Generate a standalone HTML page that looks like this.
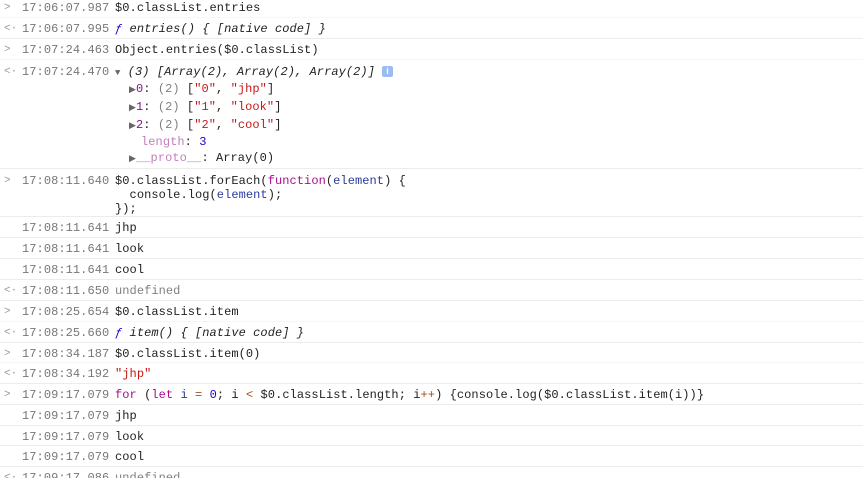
<!DOCTYPE html>
<html><head><style>
html,body{margin:0;padding:0;background:#fff;width:863px;height:478px;overflow:hidden}
body{font-family:"Liberation Mono",monospace;font-size:12px;letter-spacing:0.07px;color:#222;position:relative}
.r{position:absolute;left:0;width:863px;border-bottom:1px solid #ececec;box-sizing:border-box}
.l{position:absolute;white-space:pre;line-height:14px}
.p{position:absolute;left:4px;color:#999;font-size:11px;line-height:14px}
.ts{left:22px;color:#777}
.tx{left:115px}
.s{color:#c41a16}.n{color:#1c00cf}.k{color:#aa0d91}.v{color:#2a3a9a}.o{color:#a0501a}
.pr{color:#881391}.g{color:#808080}.lp{color:#c080c0}.f{color:#1c00cf}
.it{font-style:italic}
.tri{color:#666;font-size:9px}
</style></head><body>
<div class="r" style="top:-3px;height:21px;border-bottom-color:#f6f6f6"><span class="p" style="top:4px">&gt;</span><span class="l ts" style="top:4px">17:06:07.987</span><span class="l tx" style="top:4px">$0.classList.entries</span></div>
<div class="r" style="top:18px;height:21px"><span class="p" style="top:4px">&lt;·</span><span class="l ts" style="top:4px">17:06:07.995</span><span class="l tx it" style="top:4px"><span class="f">ƒ</span> entries() { [native code] }</span></div>
<div class="r" style="top:39px;height:21px;border-bottom-color:#f6f6f6"><span class="p" style="top:4px">&gt;</span><span class="l ts" style="top:4px">17:07:24.463</span><span class="l tx" style="top:4px">Object.entries($0.classList)</span></div>
<div class="r" style="top:60px;height:109px"><span class="p" style="top:5px">&lt;·</span><span class="l ts" style="top:5px">17:07:24.470</span>
<span class="l tx it" style="top:5px"><span class="tri">▼</span> (3) [Array(2), Array(2), Array(2)]</span>
<span style="position:absolute;left:382px;top:6px;width:11px;height:11px;background:#9bbcf0;border-radius:2px;color:#fff;font:bold 9px 'Liberation Sans',sans-serif;text-align:center;line-height:11px">i</span>
<span class="l" style="left:129px;top:22px"><span class="tri">▶</span><span class="pr">0</span>: <span class="g">(2)</span> [<span class="s">"0"</span>, <span class="s">"jhp"</span>]</span>
<span class="l" style="left:129px;top:40px"><span class="tri">▶</span><span class="pr">1</span>: <span class="g">(2)</span> [<span class="s">"1"</span>, <span class="s">"look"</span>]</span>
<span class="l" style="left:129px;top:58px"><span class="tri">▶</span><span class="pr">2</span>: <span class="g">(2)</span> [<span class="s">"2"</span>, <span class="s">"cool"</span>]</span>
<span class="l" style="left:141px;top:75px"><span class="lp">length</span>: <span class="n">3</span></span>
<span class="l" style="left:129px;top:91px"><span class="tri">▶</span><span class="lp">__proto__</span>: Array(0)</span>
</div>
<div class="r" style="top:169px;height:48px"><span class="p" style="top:5px">&gt;</span><span class="l ts" style="top:5px">17:08:11.640</span><span class="l tx" style="top:5px">$0.classList.forEach(<span class="k">function</span>(<span class="v">element</span>) {
  console.log(<span class="v">element</span>);
});</span></div>
<div class="r" style="top:217px;height:21px"><span class="l ts" style="top:4px">17:08:11.641</span><span class="l tx" style="top:4px">jhp</span></div>
<div class="r" style="top:238px;height:21px"><span class="l ts" style="top:4px">17:08:11.641</span><span class="l tx" style="top:4px">look</span></div>
<div class="r" style="top:259px;height:21px"><span class="l ts" style="top:4px">17:08:11.641</span><span class="l tx" style="top:4px">cool</span></div>
<div class="r" style="top:280px;height:21px"><span class="p" style="top:4px">&lt;·</span><span class="l ts" style="top:4px">17:08:11.650</span><span class="l tx g" style="top:4px">undefined</span></div>
<div class="r" style="top:301px;height:21px;border-bottom-color:#f6f6f6"><span class="p" style="top:4px">&gt;</span><span class="l ts" style="top:4px">17:08:25.654</span><span class="l tx" style="top:4px">$0.classList.item</span></div>
<div class="r" style="top:322px;height:21px"><span class="p" style="top:4px">&lt;·</span><span class="l ts" style="top:4px">17:08:25.660</span><span class="l tx it" style="top:4px"><span class="f">ƒ</span> item() { [native code] }</span></div>
<div class="r" style="top:343px;height:20px;border-bottom-color:#f6f6f6"><span class="p" style="top:4px">&gt;</span><span class="l ts" style="top:4px">17:08:34.187</span><span class="l tx" style="top:4px">$0.classList.item(0)</span></div>
<div class="r" style="top:363px;height:21px"><span class="p" style="top:4px">&lt;·</span><span class="l ts" style="top:4px">17:08:34.192</span><span class="l tx s" style="top:4px">"jhp"</span></div>
<div class="r" style="top:384px;height:21px"><span class="p" style="top:4px">&gt;</span><span class="l ts" style="top:4px">17:09:17.079</span><span class="l tx" style="top:4px"><span class="k">for</span> (<span class="k">let</span> <span class="v">i</span> <span class="o">=</span> <span class="n">0</span>; i <span class="o">&lt;</span> $0.classList.length; i<span class="o">++</span>) {console.log($0.classList.item(i))}</span></div>
<div class="r" style="top:405px;height:21px"><span class="l ts" style="top:4px">17:09:17.079</span><span class="l tx" style="top:4px">jhp</span></div>
<div class="r" style="top:426px;height:20px"><span class="l ts" style="top:4px">17:09:17.079</span><span class="l tx" style="top:4px">look</span></div>
<div class="r" style="top:446px;height:21px"><span class="l ts" style="top:4px">17:09:17.079</span><span class="l tx" style="top:4px">cool</span></div>
<div class="r" style="top:467px;height:21px"><span class="p" style="top:4px">&lt;·</span><span class="l ts" style="top:4px">17:09:17.086</span><span class="l tx g" style="top:4px">undefined</span></div>
</body></html>
